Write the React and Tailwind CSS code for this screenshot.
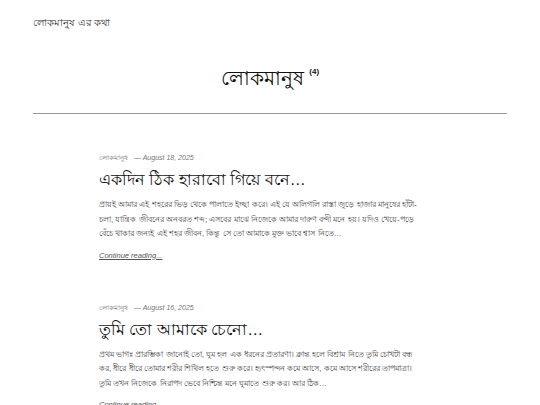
import React from 'react';

const posts = [
  {
    author: 'লোকমানুষ',
    date: 'August 18, 2025',
    title: 'একদিন ঠিক হারাবো গিয়ে বনে…',
    lines: [
      'প্রায়ই আমার এই শহরের ভিড় থেকে পালাতে ইচ্ছা করে। এই যে অলিগলি রাস্তা জুড়ে হাজার মানুষের হাঁটা-',
      'চলা, যান্ত্রিক জীবনের অনবরত শব্দ; এসবের মাঝে নিজেকে আমার দারুণ বন্দী মনে হয়। যদিও খেয়ে-পড়ে',
      'বেঁচে থাকার জন্যই এই শহর জীবন, কিন্তু সে তো আমাকে মুক্ত ভাবে শ্বাস নিতে…',
    ],
  },
  {
    author: 'লোকমানুষ',
    date: 'August 16, 2025',
    title: 'তুমি তো আমাকে চেনো…',
    lines: [
      'প্রথম ভাগঃ প্রারম্ভিকা জানোই তো, ঘুম হল এক ধরনের প্রতারণা। ক্লান্ত হলে বিশ্রাম নিতে তুমি চোখটা বন্ধ',
      'কর, ধীরে ধীরে তোমার শরীর শিথিল হতে শুরু করে। হৃৎস্পন্দন কমে আসে, কমে আসে শরীরের তাপমাত্রা।',
      'তুমি তখন নিজেকে নিরাপদ ভেবে নিশ্চিন্ত মনে ঘুমাতে শুরু কর। আর ঠিক…',
    ],
  },
];

function App() {
  return (
    <div className="min-h-screen bg-white text-[#222] font-['Liberation_Sans',sans-serif]">
      {/* Header */}
      <header className="px-[33px] pt-[15px]">
        <p className="text-[9.7px] leading-[16px] text-[#333]">লোকমানুষ এর কথা</p>
      </header>

      {/* Archive title */}
      <div className="mx-[33px] mt-[31px] pb-[19px] border-b border-[#999] text-center">
        <h1 className="text-[19.5px] leading-[32px] text-[#111]">
          লোকমানুষ <sup className="text-[8px] font-bold align-super">(4)</sup>
        </h1>
      </div>

      {/* Posts */}
      <main className="pl-[99px] pr-[60px] pt-[39px] flex flex-col gap-[41px]">
        {posts.map((p) => (
          <article key={p.date}>
            <div className="flex items-center gap-[6px] text-[7px] leading-[10px] text-[#767676]">
              <span>{p.author}</span>
              <span className="italic">— {p.date}</span>
            </div>
            <h2 className="mt-[5px] text-[16px] leading-[24px] text-[#111]">{p.title}</h2>
            <p className="mt-[6px] text-[7.9px] leading-[14.5px] text-[#444]">
              {p.lines.map((l, i) => (
                <span key={i} className="block whitespace-nowrap">{l}</span>
              ))}
            </p>
            <a className="block mt-[8px] text-[7.5px] leading-[12px] italic underline text-[#555]">Continue reading...</a>
          </article>
        ))}
      </main>
    </div>
  );
}

export default App;
